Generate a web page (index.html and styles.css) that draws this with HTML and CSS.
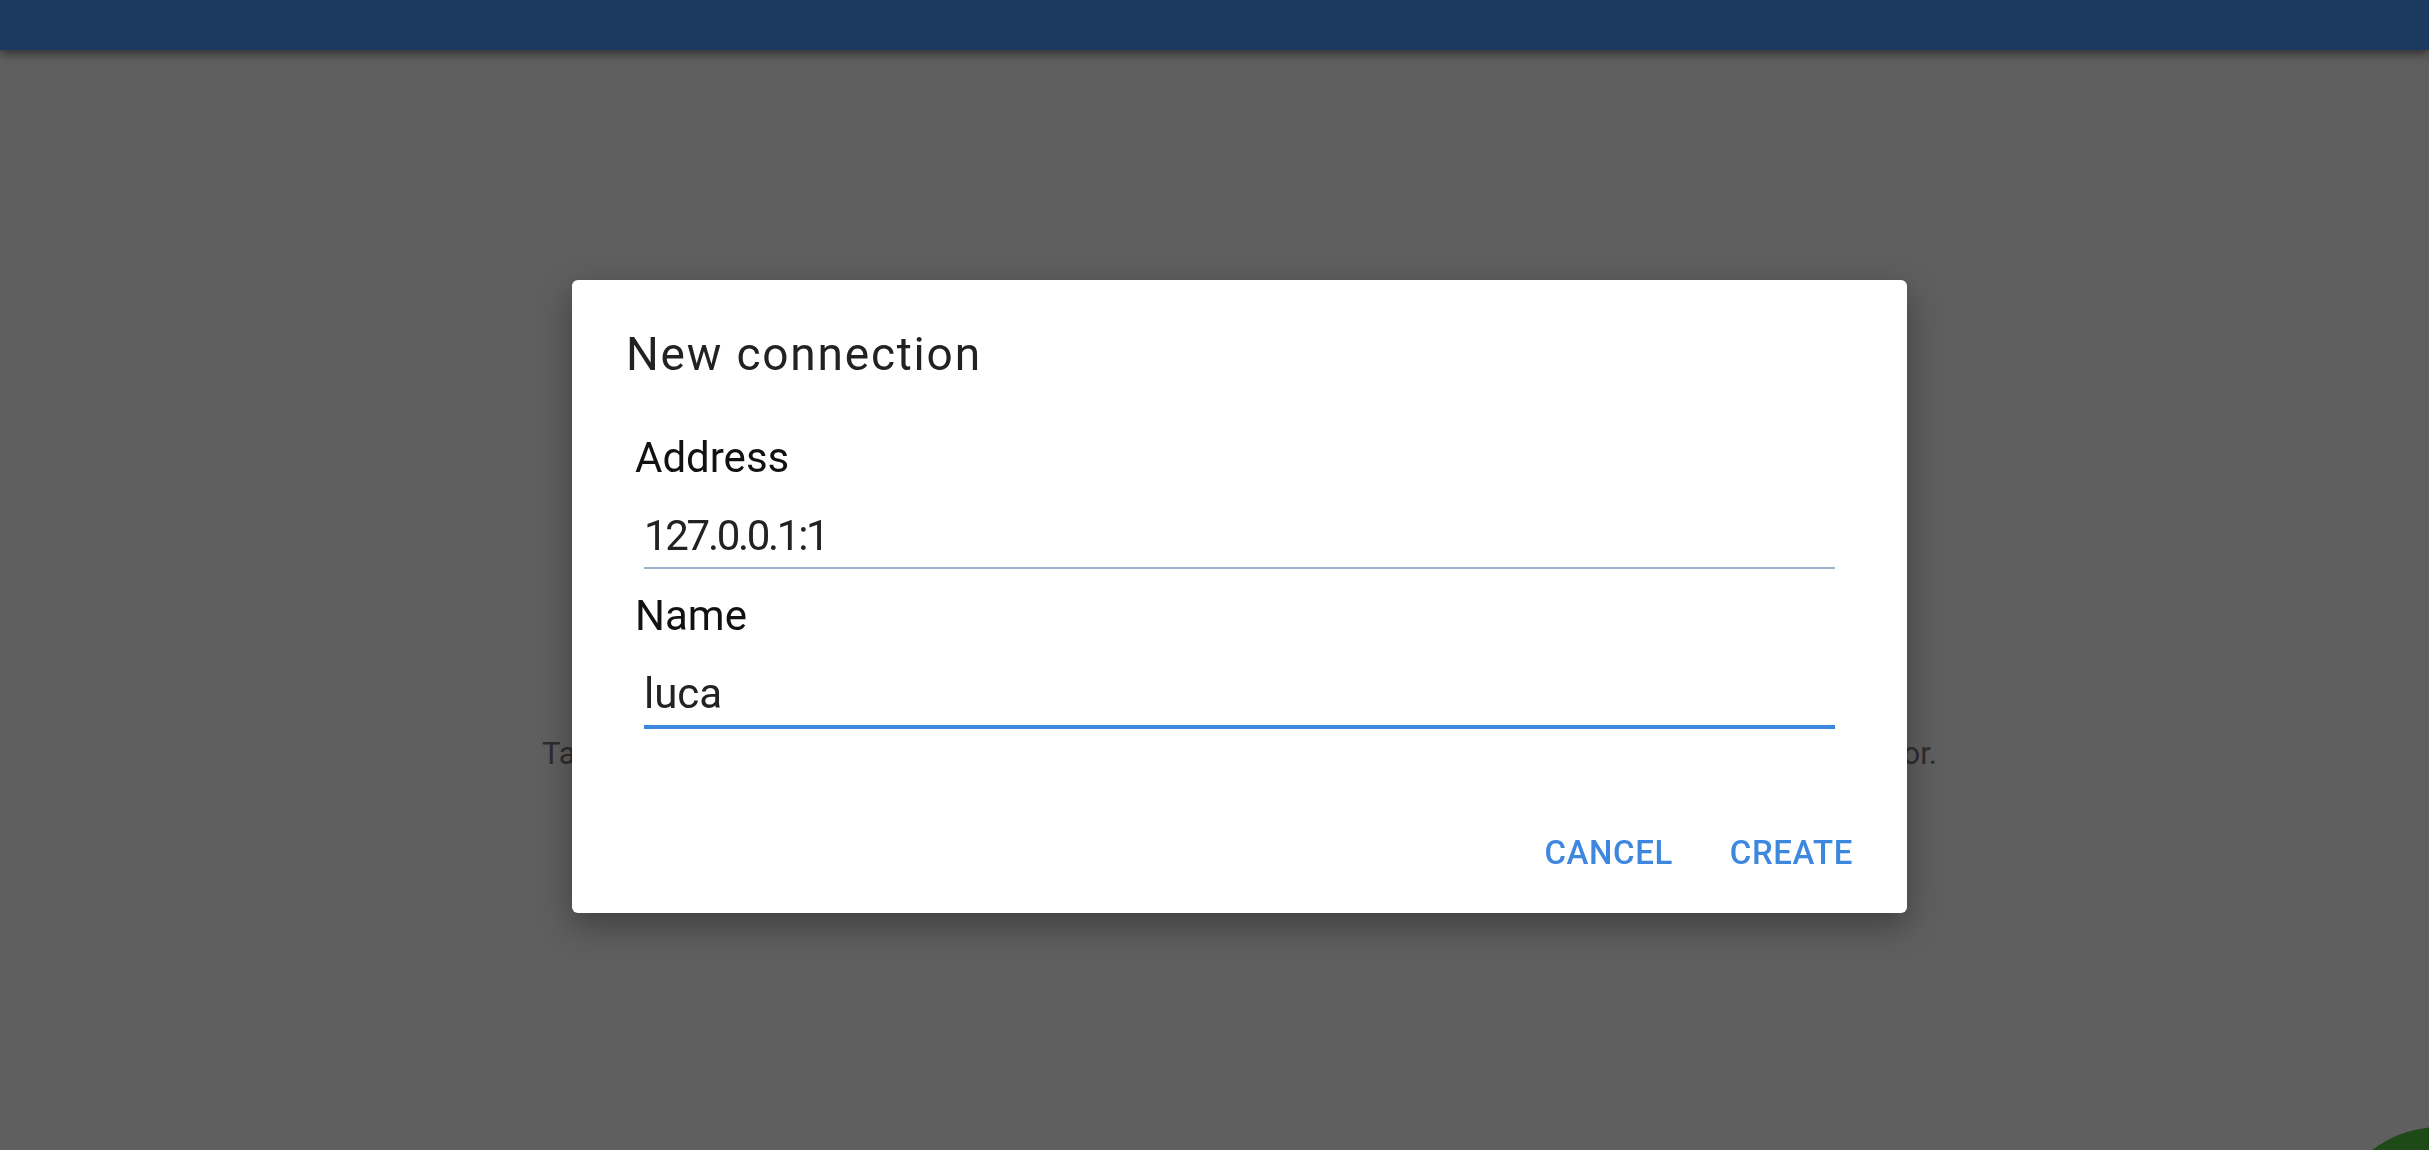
FILE: index.html
```html
<!DOCTYPE html>
<html lang="en">
<head>
    <meta charset="UTF-8">
    <meta name="viewport" content="width=device-width, initial-scale=1.0">
    <title>Connections</title>
    <link rel="stylesheet" href="styles.css">
</head>
<body>
    <header class="appbar"></header>

    <main class="content">
        <p class="empty-hint">Tap the button below to add a new connection, or scan the QR code shown in the desktop editor.</p>
    </main>

    <div class="fab"></div>

    <div class="overlay">
        <div class="dialog">
            <h2 class="dialog-title">New connection</h2>

            <div class="field">
                <label class="field-label" for="address">Address</label>
                <input type="text" id="address" class="field-input address-input" value="127.0.0.1:1">
            </div>

            <div class="field">
                <label class="field-label" for="name">Name</label>
                <input type="text" id="name" class="field-input focused" value="luca">
            </div>

            <div class="dialog-actions">
                <button class="text-btn">Cancel</button>
                <button class="text-btn">Create</button>
            </div>
        </div>
    </div>
</body>
</html>
```

FILE: styles.css
```css
:root {
    --appbar: #1c3961;
    --page-bg: #5f5f5f;
    --accent: #3d87df;
    --underline: #a0b1d0;
    --text-dark: #1e1e1e;
}

* {
    margin: 0;
    padding: 0;
    box-sizing: border-box;
}

html, body {
    height: 100%;
}

body {
    font-family: Roboto, 'Noto Sans', sans-serif;
    background-color: var(--page-bg);
    color: var(--text-dark);
    overflow: hidden;
    display: flex;
    flex-direction: column;
}

.appbar {
    height: 50px;
    flex-shrink: 0;
    background-color: var(--appbar);
    box-shadow: 0 3px 10px rgba(0, 0, 0, 0.55);
    position: relative;
    z-index: 1;
}

.content {
    flex: 1;
    display: flex;
    justify-content: center;
    padding-left: 50px;
    padding-top: 684px;
}

.empty-hint {
    width: 1395px;
    font-size: 31px;
    line-height: 40px;
    color: #2d2d2d;
    text-align: justify;
    text-align-last: justify;
}

.fab {
    position: fixed;
    left: 2328px;
    top: 1127px;
    width: 224px;
    height: 224px;
    border-radius: 50%;
    background-color: #1e4a17;
}

.overlay {
    position: fixed;
    top: 50px;
    left: 0;
    right: 0;
    bottom: 0;
    display: flex;
    align-items: center;
    justify-content: center;
    padding-left: 50px;
    padding-bottom: 8px;
    z-index: 2;
}

.dialog {
    width: 1335px;
    background-color: #ffffff;
    border-radius: 6px;
    box-shadow: 0 12px 34px rgba(0, 0, 0, 0.35);
    padding: 46px 54px 40px;
    display: flex;
    flex-direction: column;
}

.dialog-title {
    font-size: 46px;
    line-height: 56px;
    font-weight: 400;
    letter-spacing: 1.8px;
    color: #222222;
    margin-bottom: 51px;
}

.field {
    display: flex;
    flex-direction: column;
    padding: 0 9px;
}

.field + .field {
    margin-top: 22px;
}

.field-label {
    font-size: 42px;
    line-height: 50px;
    color: #111111;
    margin-bottom: 28px;
}

.field-input {
    margin: 0 9px;
    font-family: inherit;
    font-size: 42px;
    line-height: 50px;
    height: 58px;
    padding: 0 0 6px;
    border: none;
    border-bottom: 2px solid var(--underline);
    color: #222222;
    background: transparent;
    outline: none;
}

.address-input {
    letter-spacing: -2.3px;
}

.field-input.focused {
    height: 60px;
    border-bottom: 4px solid var(--accent);
}

.dialog-actions {
    display: flex;
    justify-content: flex-end;
    gap: 57px;
    margin-top: 104px;
}

.text-btn {
    font-family: inherit;
    font-size: 33px;
    line-height: 40px;
    font-weight: 500;
    letter-spacing: 0.6px;
    text-transform: uppercase;
    color: var(--accent);
    background: transparent;
    border: none;
    cursor: pointer;
}
```
